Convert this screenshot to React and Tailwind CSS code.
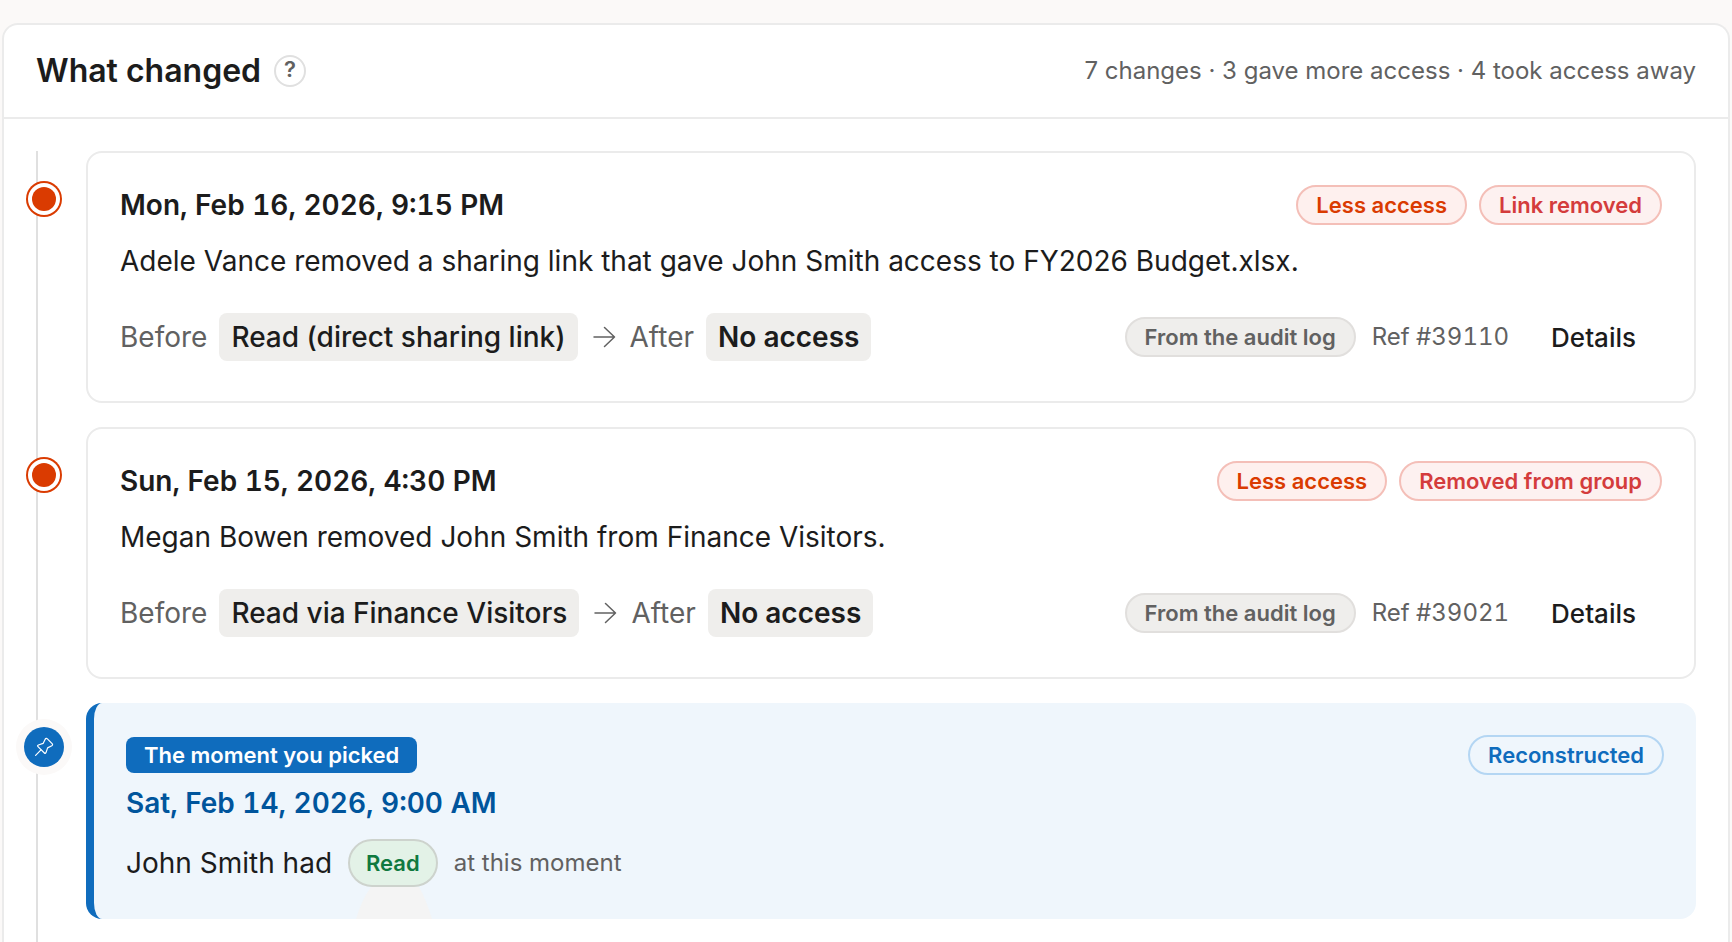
import React from 'react';
import clsx from 'clsx';

const changes = [
  {
    id: 39110,
    date: 'Mon, Feb 16, 2026, 9:15 PM',
    kind: 'Link removed',
    summary: 'Adele Vance removed a sharing link that gave John Smith access to FY2026 Budget.xlsx.',
    before: 'Read (direct sharing link)',
    after: 'No access',
  },
  {
    id: 39021,
    date: 'Sun, Feb 15, 2026, 4:30 PM',
    kind: 'Removed from group',
    summary: 'Megan Bowen removed John Smith from Finance Visitors.',
    before: 'Read via Finance Visitors',
    after: 'No access',
  },
];

const badgeTones = {
  less: 'border-[#f4bfb8] bg-[#fef0ee] text-[#da3b01]',
  danger: 'border-[#f4bfb8] bg-[#fdf1f0] text-[#d43c3c]',
  neutral: 'border-[#e1dfdd] bg-[#efeeec] text-[#616161]',
  info: 'border-[#b4d6f3] text-[#0f6cbd]',
};

const Badge = ({ tone, children }) => (
  <span
    className={clsx(
      'inline-flex h-10 items-center whitespace-nowrap rounded-full border-2 px-[18px] text-[22px] font-semibold',
      badgeTones[tone]
    )}
  >
    {children}
  </span>
);

const ArrowIcon = () => (
  <svg className="h-7 w-7 text-[#616161]" viewBox="0 0 28 28" fill="none" stroke="currentColor" strokeWidth="1.5" strokeLinecap="round" strokeLinejoin="round" aria-hidden="true">
    <path d="M4 14H24.5M14.5 4.5L24.5 14L14.5 23.5" />
  </svg>
);

const PinIcon = () => (
  <svg className="h-5 w-5" viewBox="0 0 20 20" fill="none" stroke="currentColor" strokeWidth="1.2" strokeLinecap="round" strokeLinejoin="round" aria-hidden="true">
    <path d="M11.2 2.2Q12.2 0.8 13.4 1.9L18.1 6.6Q19.2 7.8 17.8 8.8L13.6 10.9L12 15.6Q11.4 17 10.4 16L4 9.6Q3 8.6 4.4 8L9.1 6.4Z" />
    <path d="M7 12.9L1.6 18.4" />
  </svg>
);

const ChangeItem = ({ change }) => (
  <li className="flex">
    <div className="w-[50px] shrink-0 pt-9">
      <div className="-ml-1 h-6 w-6 rounded-full bg-[#da3b01] ring-2 ring-[#da3b01] ring-offset-4 ring-offset-white" />
    </div>
    <article className="min-w-0 flex-1 rounded-2xl border-2 border-[#ebebeb] bg-white p-8">
      <div className="flex items-center justify-between">
        <h3 className="text-[28px] leading-10 font-semibold tabular-nums">{change.date}</h3>
        <div className="flex gap-3">
          <Badge tone="less">Less access</Badge>
          <Badge tone="danger">{change.kind}</Badge>
        </div>
      </div>
      <p className="mt-4 text-[28px] leading-10">{change.summary}</p>
      <div className="mt-6 flex flex-wrap items-center justify-between">
        <div className="flex items-center gap-3 text-[28px] leading-10 text-[#616161]">
          <span>Before</span>
          <span className="rounded-lg bg-[#efeeec] px-3 py-1 font-medium text-[#1c1c1c]">{change.before}</span>
          <ArrowIcon />
          <span>After</span>
          <span className="rounded-lg bg-[#efeeec] px-3 py-1 font-semibold text-[#1c1c1c]">{change.after}</span>
        </div>
        <div className="flex items-center gap-4">
          <Badge tone="neutral">From the audit log</Badge>
          <span className="text-2xl text-[#616161] tabular-nums">Ref #{change.id}</span>
          <button type="button" className="h-16 rounded-lg px-[26px] text-[26px] font-medium hover:bg-[#f5f5f5]">
            Details
          </button>
        </div>
      </div>
    </article>
  </li>
);

const PickedMoment = () => (
  <li className="flex">
    <div className="w-[50px] shrink-0 pt-6">
      <div className="-ml-3 flex h-10 w-10 items-center justify-center rounded-full bg-[#0f6cbd] text-white ring-8 ring-[#fbf9f8]">
        <PinIcon />
      </div>
    </div>
    <article className="min-w-0 flex-1 rounded-2xl border-l-8 border-[#0f6cbd] bg-[#eff6fc] p-8">
      <div className="flex items-center justify-between">
        <span className="rounded-lg bg-[#0f6cbd] px-[18px] text-[22px] leading-9 font-semibold text-white">The moment you picked</span>
        <Badge tone="info">Reconstructed</Badge>
      </div>
      <h3 className="mt-2 text-[28px] leading-10 font-semibold text-[#00559c] tabular-nums">Sat, Feb 14, 2026, 9:00 AM</h3>
      <div className="mt-4 flex items-center gap-4">
        <span className="text-[28px] leading-10">John Smith had</span>
        <span className="relative inline-flex h-12 items-center rounded-full border-2 border-[#cdd3cd] bg-[#e3f2e7] px-4 text-[22px] font-semibold text-[#10793f]">
          Read
          <svg className="absolute top-[46px] left-1.5 h-8 w-[76px]" viewBox="0 0 76 32" aria-hidden="true">
            <path d="M15 0H63Q70 12 76 32H0Q6 12 15 0Z" fill="#f4f4f4" />
          </svg>
        </span>
        <span className="text-2xl text-[#616161]">at this moment</span>
      </div>
    </article>
  </li>
);

const App = () => {
  return (
    <main className="flex min-h-screen flex-col bg-[#fbf9f8] px-0.5 pt-[23px] font-[Inter,sans-serif] text-[#1c1c1c]">
      <section className="flex flex-1 flex-col rounded-t-2xl border-2 border-b-0 border-[#ebebeb] bg-white">
        <header className="flex items-center justify-between border-b-2 border-[#ebebeb] px-8 py-[25px]">
          <div className="flex items-center gap-[13px]">
            <h2 className="text-[32px] leading-[42px] font-semibold">What changed</h2>
            <button
              type="button"
              aria-label="About these changes"
              className="flex h-8 w-8 items-center justify-center rounded-full border-2 border-[#e0e0e0] pb-1 text-[22px] leading-none font-semibold text-[#616161]"
            >
              ?
            </button>
          </div>
          <p className="text-2xl text-[#616161]">7 changes · 3 gave more access · 4 took access away</p>
        </header>

        <div className="flex flex-1 px-8 pt-8">
          <div className="relative flex-1">
            {/* Timeline rail */}
            <div className="absolute inset-y-0 left-0 w-0.5 bg-[#e0e0e0]" />
            <ol className="relative flex flex-col gap-6">
              {changes.map((change) => (
                <ChangeItem key={change.id} change={change} />
              ))}
              <PickedMoment />
            </ol>
          </div>
        </div>
      </section>
    </main>
  );
};

export default App;
